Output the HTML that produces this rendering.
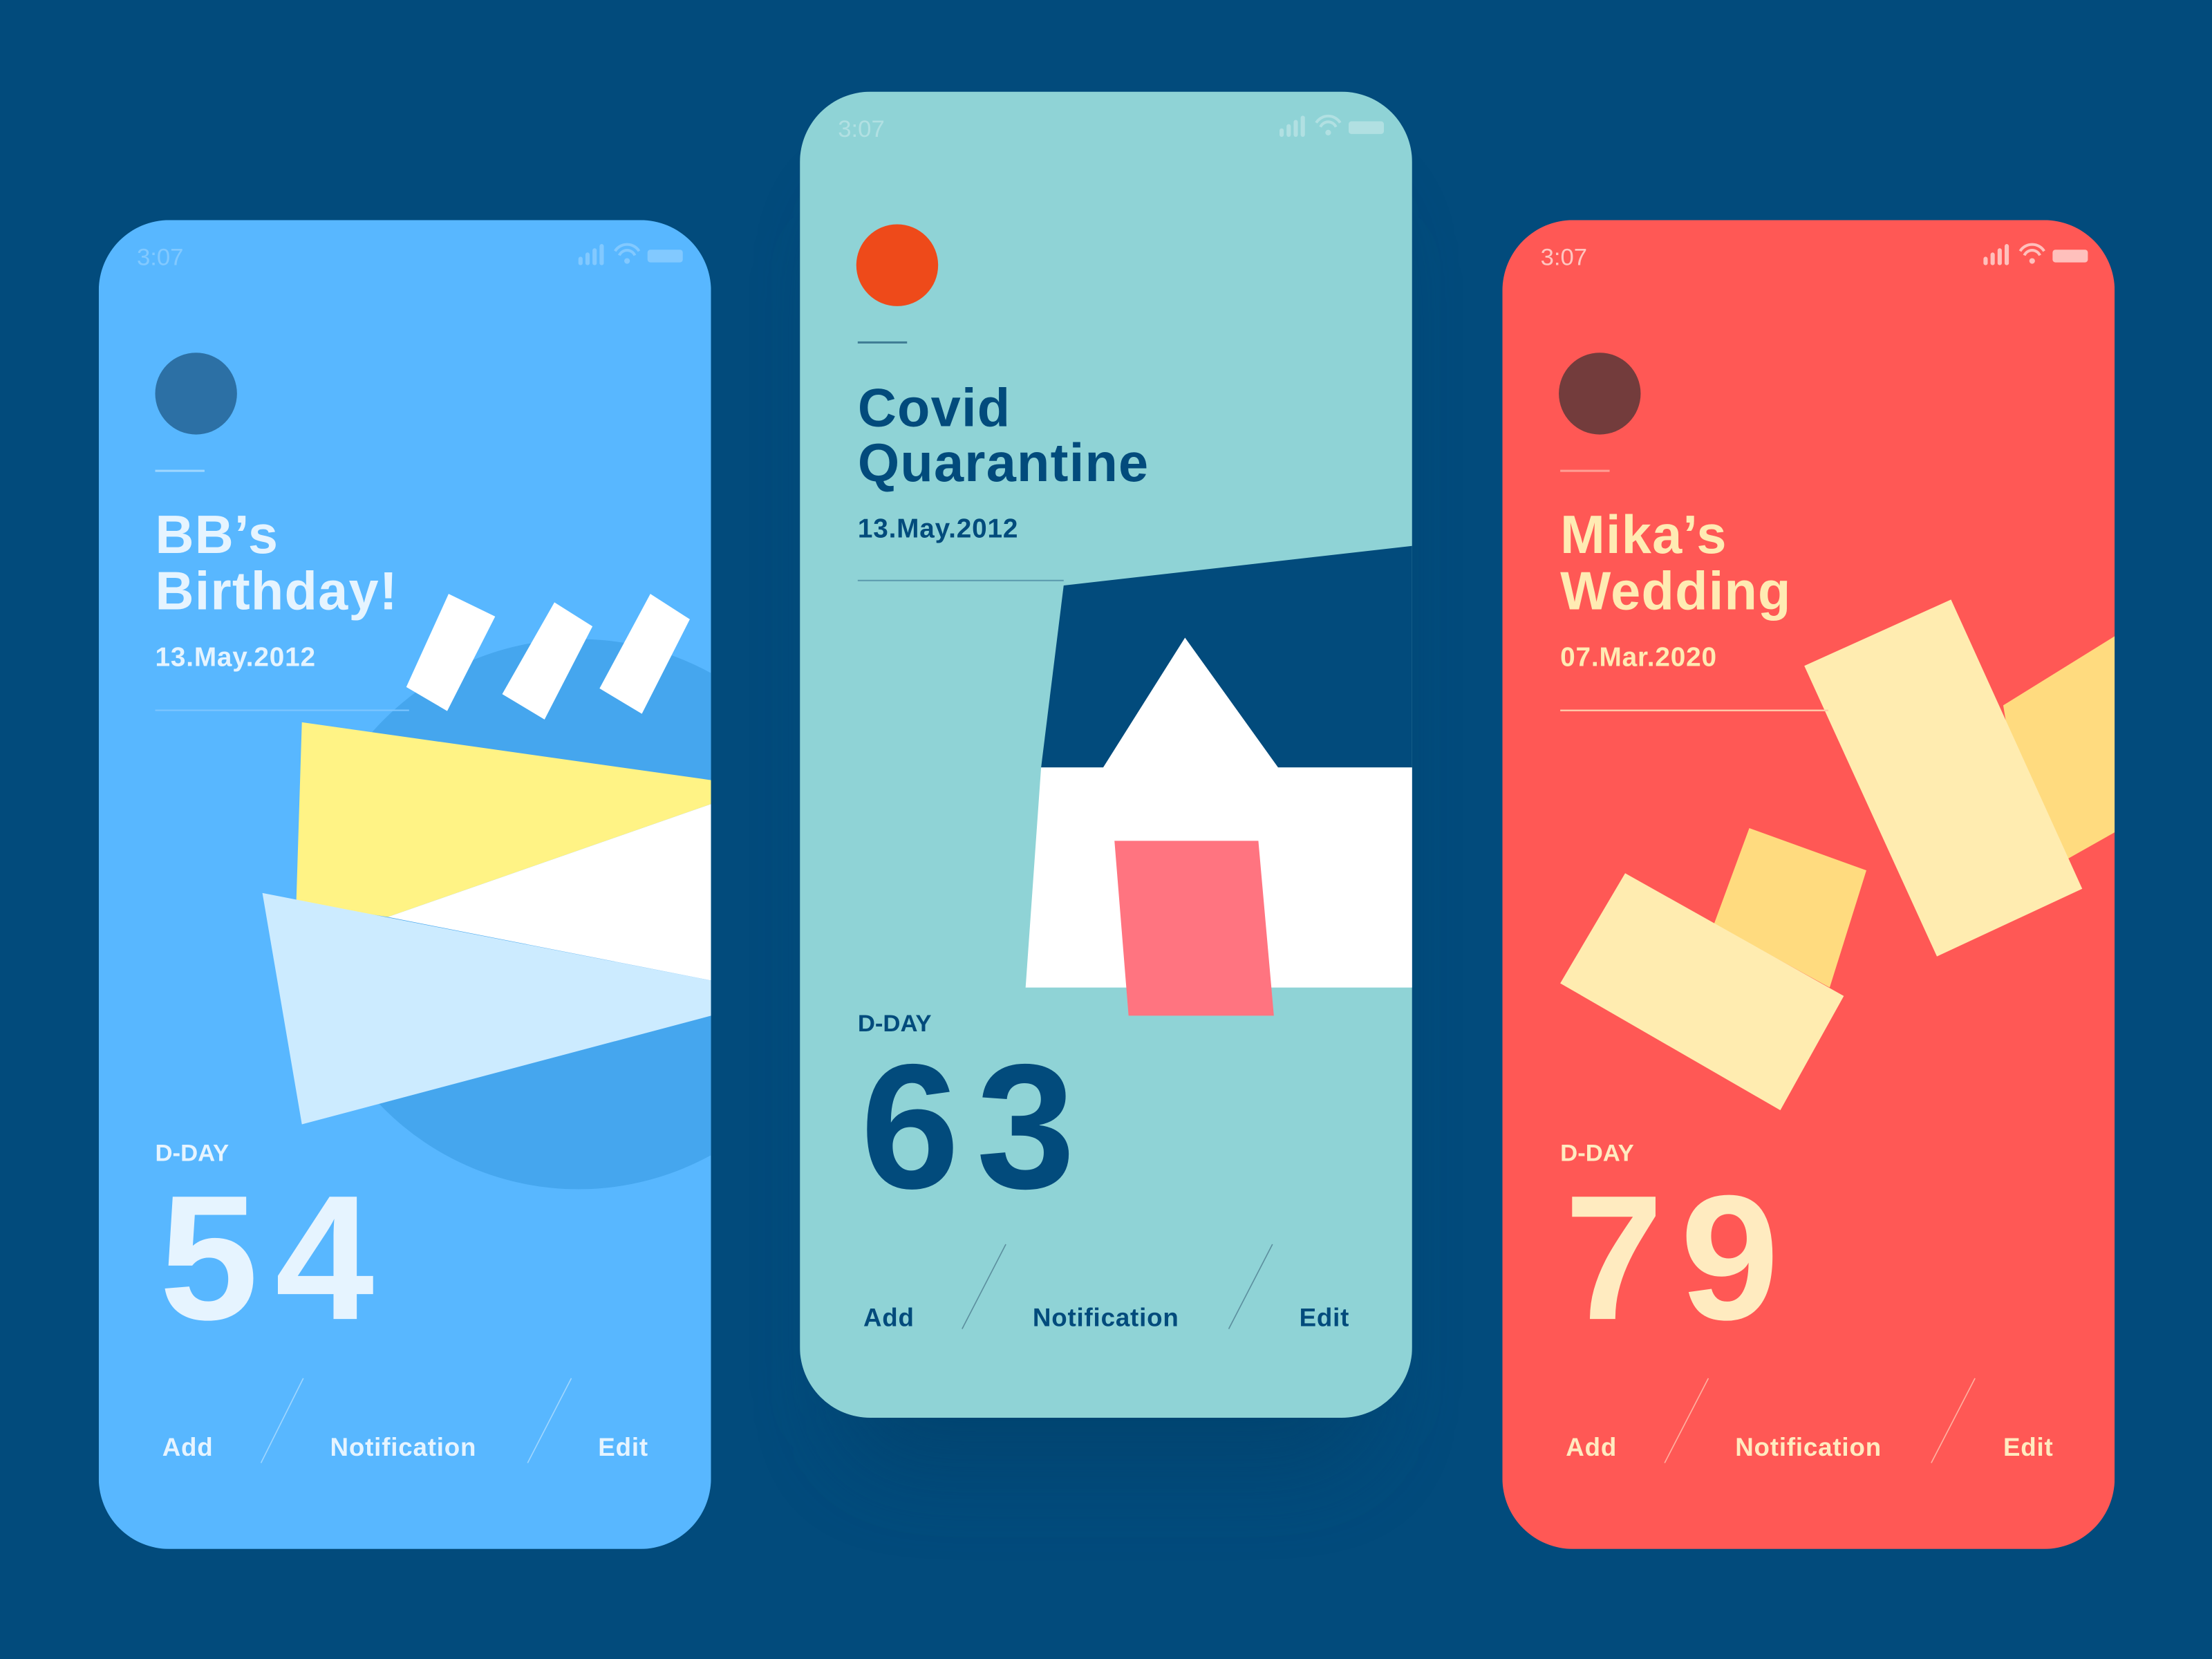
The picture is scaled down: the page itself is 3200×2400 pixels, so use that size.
<!DOCTYPE html>
<html><head><meta charset="utf-8"><style>
html,body{margin:0;padding:0;background:#024B7C;}
svg{display:block;}
text{font-family:"Liberation Sans",sans-serif;font-weight:bold;}
.big{letter-spacing:12px;}
.ttl{letter-spacing:0.6px;}
.mn{letter-spacing:0.4px;}
</style></head><body>
<svg width="3200" height="2400" viewBox="0 0 1568 1176" xmlns="http://www.w3.org/2000/svg">
<defs>
<clipPath id="c1"><rect x="70" y="156" width="434" height="942" rx="50"/></clipPath>
<clipPath id="c2"><rect x="567" y="65" width="434" height="940" rx="50"/></clipPath>
<clipPath id="c3"><rect x="1065" y="156" width="434" height="942" rx="50"/></clipPath>
<filter id="sh" x="-30%" y="-30%" width="160%" height="160%"><feGaussianBlur stdDeviation="30"/></filter>
</defs>
<rect width="1568" height="1176" fill="#024B7C"/>
<rect x="597" y="140" width="374" height="900" rx="50" fill="#013F69" opacity="0.6" filter="url(#sh)"/>

<!-- LEFT CARD -->
<g clip-path="url(#c1)">
<rect x="70" y="156" width="434" height="942" fill="#58B7FF"/>
<circle cx="410" cy="648" r="195" fill="#45A6EE"/>
<polygon points="214,512 504,553 504,570 275,650 210,640" fill="#FFF385"/>
<polygon points="275,650 504,570 504,695" fill="#FFFFFF"/>
<polygon points="186,633 504,695 504,720 214,797" fill="#CCEBFF"/>
<polygon points="318,421 351,437 317,504 288,487" fill="#fff"/>
<polygon points="393,427 420,444 386,510 356,492" fill="#fff"/>
<polygon points="461,421 489,439 455,506 425,488" fill="#fff"/>
</g>
<text x="97" y="188" font-size="17" fill="#fff" opacity="0.25" style="font-weight:normal">3:07</text>
<g fill="#fff" opacity="0.25"><rect x="410" y="182" width="3" height="6" rx="1.5"/><rect x="415" y="179" width="3" height="9" rx="1.5"/><rect x="420" y="176" width="3" height="12" rx="1.5"/><rect x="425" y="173" width="3" height="15" rx="1.5"/><path d="M436 178 a10 10 0 0 1 17 0 M439 181 a6 6 0 0 1 11 0" stroke="#fff" stroke-width="2" fill="none"/><circle cx="444.5" cy="185" r="2"/><rect x="459" y="177" width="25" height="9" rx="2"/></g>
<circle cx="139" cy="279" r="29" fill="#2C70A5"/>
<rect x="110" y="333" width="35" height="1.5" fill="#9FD6FF"/>
<text class="ttl" x="110" y="392" font-size="38" fill="#E6F4FF">BB’s</text>
<text class="ttl" x="110" y="432" font-size="38" fill="#E6F4FF">Birthday!</text>
<text class="mn" x="110" y="472" font-size="19" fill="#E6F4FF">13.May.2012</text>
<rect x="110" y="503" width="180" height="1" fill="#7EC6FF"/>
<text x="110" y="823" font-size="17" fill="#E6F4FF">D-DAY</text>
<text class="big" x="113" y="935" font-size="126" fill="#E6F4FF">54</text>
<text class="mn" x="115" y="1032" font-size="18" fill="#E6F4FF">Add</text>
<text class="mn" x="234" y="1032" font-size="18" fill="#E6F4FF">Notification</text>
<text class="mn" x="424" y="1032" font-size="18" fill="#E6F4FF">Edit</text>
<line x1="185" y1="1037" x2="215" y2="977" stroke="#9FD6FF" stroke-width="0.8"/>
<line x1="374" y1="1037" x2="405" y2="977" stroke="#9FD6FF" stroke-width="0.8"/>

<!-- MIDDLE CARD -->
<g clip-path="url(#c2)">
<rect x="567" y="65" width="434" height="940" fill="#8FD3D6"/>
<polygon points="754,415 1001,387 1001,544 738,544" fill="#024B7C"/>
<polygon points="738,544 782,544 840,452 906,544 1001,544 1001,700 727,700" fill="#FFFFFF"/>
<polygon points="790,596 892,596 903,720 800,720" fill="#FF7480"/>
</g>
<text x="594" y="97" font-size="17" fill="#fff" opacity="0.3" style="font-weight:normal">3:07</text>
<g fill="#fff" opacity="0.3"><rect x="907" y="91" width="3" height="6" rx="1.5"/><rect x="912" y="88" width="3" height="9" rx="1.5"/><rect x="917" y="85" width="3" height="12" rx="1.5"/><rect x="922" y="82" width="3" height="15" rx="1.5"/><path d="M933 87 a10 10 0 0 1 17 0 M936 90 a6 6 0 0 1 11 0" stroke="#fff" stroke-width="2" fill="none"/><circle cx="941.5" cy="94" r="2"/><rect x="956" y="86" width="25" height="9" rx="2"/></g>
<circle cx="636" cy="188" r="29" fill="#EE4A1A"/>
<rect x="608" y="242" width="35" height="1.5" fill="#3F7C95"/>
<text class="ttl" x="608" y="302" font-size="38" fill="#024B7C">Covid</text>
<text class="ttl" x="608" y="341" font-size="38" fill="#024B7C">Quarantine</text>
<text class="mn" x="608" y="381" font-size="19" fill="#024B7C">13.May.2012</text>
<rect x="608" y="411" width="146" height="1" fill="#5C9AAE"/>
<text x="608" y="731" font-size="17" fill="#024B7C">D-DAY</text>
<text class="big" x="610" y="842" font-size="126" fill="#024B7C">63</text>
<text class="mn" x="612" y="940" font-size="18" fill="#024B7C">Add</text>
<text class="mn" x="732" y="940" font-size="18" fill="#024B7C">Notification</text>
<text class="mn" x="921" y="940" font-size="18" fill="#024B7C">Edit</text>
<line x1="682" y1="942" x2="713" y2="882" stroke="#5C8F9E" stroke-width="0.8"/>
<line x1="871" y1="942" x2="902" y2="882" stroke="#5C8F9E" stroke-width="0.8"/>

<!-- RIGHT CARD -->
<g clip-path="url(#c3)">
<rect x="1065" y="156" width="434" height="942" fill="#FF5855"/>
<polygon points="1420,500 1499,451 1499,590 1460,612 1430,560" fill="#FFDB7F"/>
<polygon points="1279,472 1383,425 1476,630 1373,678" fill="#FFECB0"/>
<polygon points="1240,587 1323,617 1297,700 1215,655" fill="#FFDB7F"/>
<polygon points="1152,619 1307,706 1262,787 1106,697" fill="#FFECB0"/>
</g>
<text x="1092" y="188" font-size="17" fill="#FFC6C0" style="font-weight:normal">3:07</text>
<g fill="#FFC0BC"><rect x="1406" y="182" width="3" height="6" rx="1.5"/><rect x="1411" y="179" width="3" height="9" rx="1.5"/><rect x="1416" y="176" width="3" height="12" rx="1.5"/><rect x="1421" y="173" width="3" height="15" rx="1.5"/><path d="M1432 178 a10 10 0 0 1 17 0 M1435 181 a6 6 0 0 1 11 0" stroke="#FFC0BC" stroke-width="2" fill="none"/><circle cx="1440.5" cy="185" r="2"/><rect x="1455" y="177" width="25" height="9" rx="2"/></g>
<circle cx="1134" cy="279" r="29" fill="#733C3C"/>
<rect x="1106" y="333" width="35" height="1.5" fill="#FF9E94"/>
<text class="ttl" x="1106" y="392" font-size="38" fill="#FFEBB3">Mika’s</text>
<text class="ttl" x="1106" y="432" font-size="38" fill="#FFEBB3">Wedding</text>
<text class="mn" x="1106" y="472" font-size="19" fill="#FFEBB3">07.Mar.2020</text>
<rect x="1106" y="503" width="190" height="1.2" fill="#FFC8A8"/>
<text x="1106" y="823" font-size="17" fill="#FFEBC0">D-DAY</text>
<text class="big" x="1109" y="935" font-size="126" fill="#FFEBC0">79</text>
<text class="mn" x="1110" y="1032" font-size="18" fill="#FFEBC0">Add</text>
<text class="mn" x="1230" y="1032" font-size="18" fill="#FFEBC0">Notification</text>
<text class="mn" x="1420" y="1032" font-size="18" fill="#FFEBC0">Edit</text>
<line x1="1180" y1="1037" x2="1211" y2="977" stroke="#FFB0A0" stroke-width="0.8"/>
<line x1="1369" y1="1037" x2="1400" y2="977" stroke="#FFB0A0" stroke-width="0.8"/>
</svg>
</body></html>
